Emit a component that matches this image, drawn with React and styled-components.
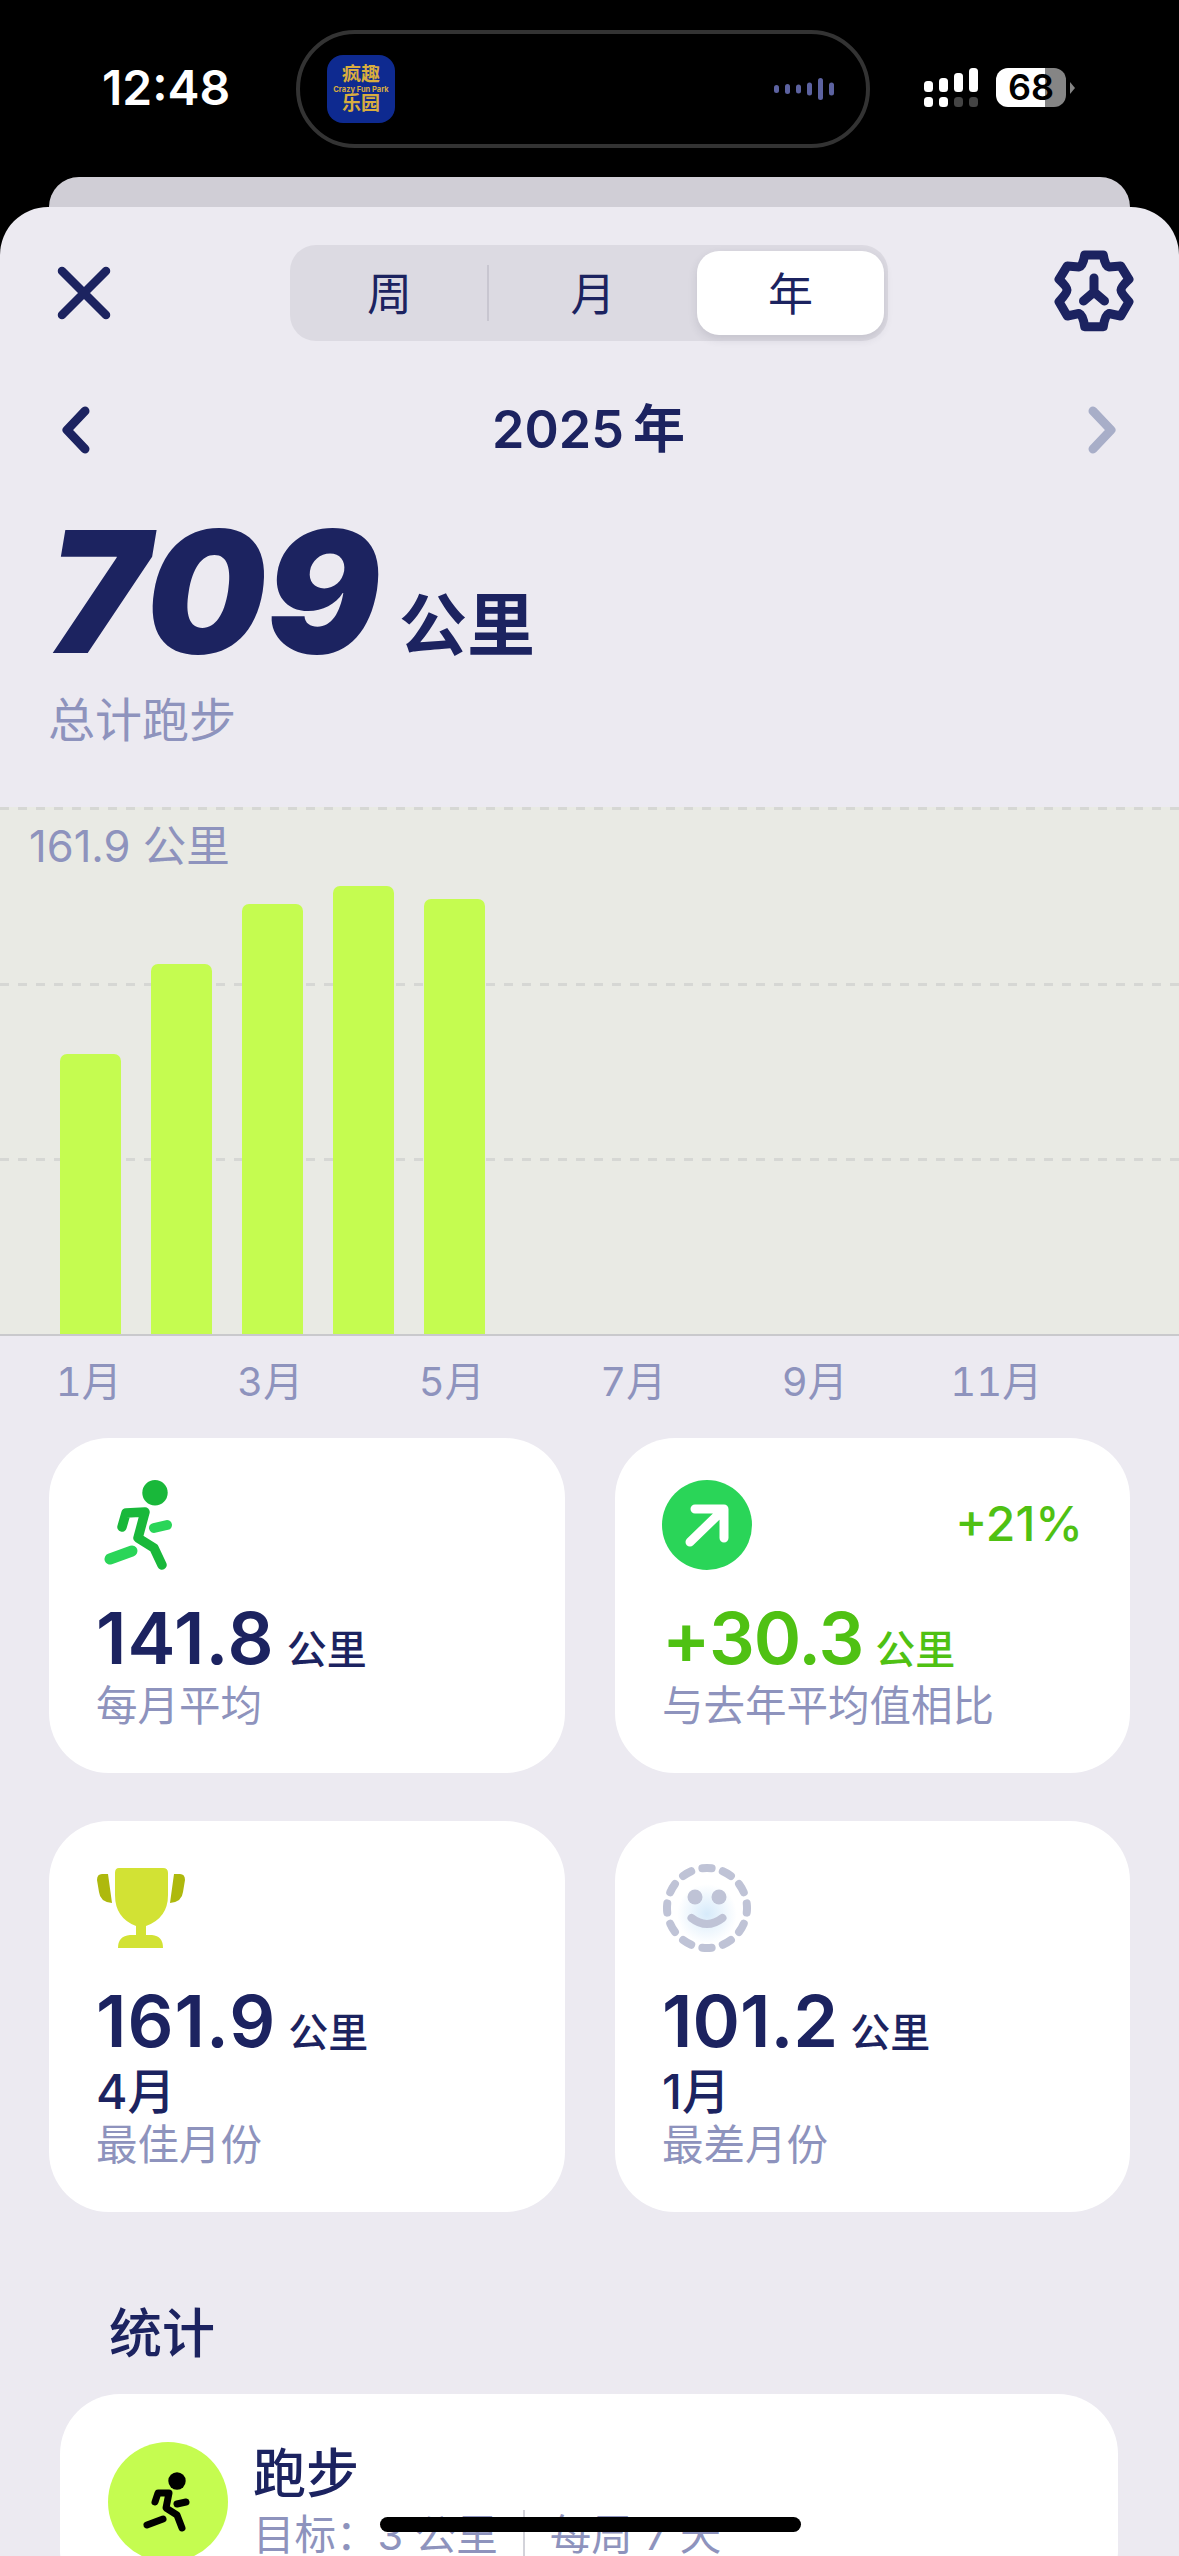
import React from "react";
import styled, { createGlobalStyle } from "styled-components";

const navy = "#1c2360";
const muted = "#8e93bd";
const green = "#4fc113";

const GlobalStyle = createGlobalStyle`
  html, body {
    margin: 0;
    background: #000;
    font-family: Inter, "Noto Sans CJK SC", sans-serif;
  }
`;

const Page = styled.div`
  position: relative;
  width: 1179px;
  height: 2556px;
  overflow: hidden;
  background: #000;
`;

const StatusBar = styled.div`
  display: flex;
  align-items: flex-start;
  height: 177px;
  box-sizing: border-box;
  padding: 30px 0 0 102px;
`;

const Time = styled.div`
  width: 194px;
  margin-top: 28px;
  color: #fff;
  font-size: 48px;
  line-height: 60px;
  font-weight: 600;
`;

const Island = styled.div`
  display: flex;
  align-items: center;
  justify-content: space-between;
  box-sizing: border-box;
  width: 574px;
  height: 118px;
  padding: 0 32px 0 27px;
  border: 4px solid #333;
  border-radius: 59px;
`;

const AppIcon = styled.div`
  display: flex;
  flex-direction: column;
  align-items: center;
  justify-content: center;
  width: 68px;
  height: 68px;
  border-radius: 16px;
  background: #0e2a90;
  color: #d9ad3f;
  font-weight: 700;
  overflow: hidden;
`;

const AppHan = styled.div`
  font-size: 19px;
  line-height: 20px;
`;

const AppLatin = styled.div`
  font-size: 7.5px;
  line-height: 9px;
  white-space: nowrap;
`;

const StatusRight = styled.div`
  display: flex;
  align-items: center;
  margin: 38px 0 0 54px;
`;

const Battery = styled.div`
  width: 70px;
  height: 39px;
  margin-left: 18px;
  border-radius: 12px;
  background: linear-gradient(90deg, #fff 0 ${(p) => p.$level}%, #858585 ${(p) => p.$level}% 100%);
  color: #000;
  font-size: 36px;
  line-height: 39px;
  font-weight: 600;
  text-align: center;
`;

const BatteryTip = styled.div`
  width: 0;
  height: 0;
  margin-left: 4px;
  border-left: 5px solid #858585;
  border-top: 6px solid transparent;
  border-bottom: 6px solid transparent;
`;

const BackSheet = styled.div`
  height: 30px;
  margin: 0 49px;
  border-radius: 30px 30px 0 0;
  background: #d0ced6;
`;

const Sheet = styled.div`
  height: 2349px;
  border-radius: 48px 48px 0 0;
  background: #eceaf1;
`;

const Header = styled.div`
  display: grid;
  grid-template-columns: 290px 598px 1fr;
  align-items: center;
  padding: 38px 0 0 0;
  height: 96px;
`;

const CloseSlot = styled.div`
  padding-left: 54px;
  display: flex;
`;

const GearSlot = styled.div`
  padding-left: 161px;
  display: flex;
  transform: translateY(-3px);
`;

const Segments = styled.div`
  display: grid;
  grid-template-columns: 199px 208px 1fr;
  align-items: stretch;
  box-sizing: border-box;
  height: 96px;
  padding: 6px 4px 6px 0;
  border-radius: 26px;
  background: #dcdae2;
`;

const Segment = styled.div`
  display: flex;
  align-items: center;
  justify-content: center;
  padding-bottom: 3px;
  color: ${navy};
  font-size: 45px;
  border-radius: 22px;
  background: ${(p) => (p.$active ? "#fff" : "transparent")};
  box-shadow: ${(p) => (p.$active ? "0 4px 10px rgba(60,60,80,0.14)" : "none")};
`;

const DividedSegment = styled(Segment)`
  border-radius: 0;
  position: relative;
  &::after {
    content: "";
    position: absolute;
    right: 0;
    top: 14px;
    bottom: 14px;
    width: 2px;
    background: #c8c6d0;
  }
`;

const NavRow = styled.div`
  display: grid;
  grid-template-columns: 1fr auto 1fr;
  align-items: center;
  height: 70px;
  margin-top: 54px;
  padding: 0 60px;
`;

const YearTitle = styled.div`
  color: ${navy};
  font-size: 52px;
  line-height: 70px;
  font-weight: 600;
  word-spacing: -4px;
  transform: translateX(-1px);
`;

const NextSlot = styled.div`
  display: flex;
  justify-content: flex-end;
  transform: translateX(-1px);
`;

const TotalRow = styled.div`
  display: flex;
  align-items: baseline;
  margin-top: 43px;
  padding-left: 48px;
  color: ${navy};
`;

const TotalValue = styled.div`
  font-size: 169px;
  line-height: 168px;
  font-weight: 900;
  font-style: italic;
`;

const TotalUnit = styled.div`
  margin-left: 19px;
  font-size: 68px;
  font-weight: 700;
  transform: translateY(-3px);
`;

const TotalLabel = styled.div`
  margin-top: 14px;
  padding-left: 48px;
  color: ${muted};
  font-size: 47px;
  line-height: 60px;
`;

const Chart = styled.div`
  position: relative;
  display: flex;
  align-items: flex-end;
  gap: 30px;
  box-sizing: border-box;
  height: 529px;
  margin-top: 57px;
  padding-left: 60px;
  background: #e9eae4;
  border-bottom: 2px solid #c9c9cc;
`;

const GridLines = styled.div`
  position: absolute;
  inset: 0;
  display: grid;
  grid-template-rows: repeat(3, 1fr);
`;

const GridLine = styled.div`
  height: 3px;
  background: repeating-linear-gradient(90deg, #d6d7d4 0 9px, transparent 9px 18px);
`;

const MaxLabel = styled.div`
  position: absolute;
  left: 29px;
  top: 14px;
  color: ${muted};
  font-size: 43.5px;
  line-height: 50px;
`;

const Bar = styled.div`
  position: relative;
  width: 61px;
  border-radius: 7px 7px 0 0;
  background: #c5fc50;
`;

const Axis = styled.div`
  display: grid;
  grid-template-columns: repeat(6, 181.5px);
  margin-left: -2px;
  height: 94px;
`;

const AxisLabel = styled.div`
  color: ${muted};
  font-size: 40px;
  line-height: 92px;
  text-align: center;
  font-variant-numeric: tabular-nums;
`;

const CardGrid = styled.div`
  display: grid;
  grid-template-columns: 516px 515px;
  column-gap: 50px;
  row-gap: 48px;
  margin-top: 8px;
  padding-left: 49px;
`;

const Card = styled.div`
  padding: 42px 47px 42px 47px;
  border-radius: 60px;
  background: #fff;
`;

const IconRow = styled.div`
  display: flex;
  align-items: center;
  justify-content: space-between;
  height: 90px;
`;

const Percent = styled.div`
  color: ${green};
  font-size: 48px;
  font-weight: 500;
  transform: translateY(-2px);
`;

const ValueRow = styled.div`
  display: flex;
  align-items: baseline;
  margin-top: 33px;
  color: ${(p) => p.$color || navy};
`;

const Value = styled.div`
  font-size: 72px;
  line-height: 70px;
  font-weight: 600;
  letter-spacing: ${(p) => p.$spacing ?? 1}px;
`;

const Unit = styled.div`
  margin-left: 12px;
  font-size: 40px;
  font-weight: 500;
`;

const Month = styled.div`
  margin-top: 8px;
  color: ${navy};
  font-size: 48px;
  line-height: 50px;
  font-weight: 500;
`;

const CardLabel = styled.div`
  margin-top: ${(p) => p.$gap}px;
  color: ${muted};
  font-size: 41.5px;
  line-height: 50px;
`;

const SectionTitle = styled.div`
  margin-top: 87px;
  padding-left: 109px;
  color: ${navy};
  font-size: 53px;
  line-height: 70px;
  font-weight: 500;
`;

const GoalCard = styled.div`
  display: flex;
  gap: 25px;
  margin: 25px 61px 0 60px;
  padding: 48px;
  border-radius: 60px;
  background: #fff;
`;

const GoalBadge = styled.div`
  flex: none;
  width: 120px;
  height: 120px;
  border-radius: 50%;
  background: #c5fc50;
`;

const GoalName = styled.div`
  margin-top: 2px;
  color: ${navy};
  font-size: 53px;
  line-height: 60px;
  font-weight: 500;
`;

const GoalMeta = styled.div`
  display: flex;
  align-items: center;
  margin-top: 6px;
  color: ${muted};
  font-size: 41.5px;
  line-height: 50px;
`;

const GoalPart = styled.div`
  padding-right: 25px;
  & + & {
    padding-left: 25px;
    border-left: 2px solid #d3d3da;
  }
`;

const HomeIndicator = styled.div`
  position: absolute;
  left: 380px;
  bottom: 24px;
  width: 421px;
  height: 15px;
  border-radius: 8px;
  background: #000;
`;

const Icon = styled.svg`
  display: block;
  flex: none;
`;

const Signal = () => {
  const top = [
    [925, 81],
    [940, 78],
    [955, 73],
    [970, 68],
  ];
  return (
    <Icon width="54" height="39" viewBox="925 68 54 39">
      {top.map(([x, y]) => (
        <rect key={x} x={x} y={y} width="9" height={92 - y} rx="3.5" fill="#fff" />
      ))}
      {top.map(([x], i) => (
        <rect key={x} x={x} y="97" width="9" height="10" rx="3.5" fill={i < 2 ? "#fff" : "#444"} />
      ))}
    </Icon>
  );
};

const Wave = () => {
  const bars = [8, 10, 9, 13, 22, 13];
  return (
    <Icon width="60" height="26" viewBox="0 0 60 26">
      {bars.map((h, i) => (
        <rect key={i} x={i * 11} y={13 - h / 2} width="5" height={h} rx="2.5" fill="#5c62a0" />
      ))}
    </Icon>
  );
};

const CloseIcon = () => (
  <Icon width="60" height="60" viewBox="0 0 60 60">
    <path d="M8 8 L52 52 M52 8 L8 52" stroke={navy} strokeWidth="8.5" strokeLinecap="round" />
  </Icon>
);

const GearIcon = () => (
  <Icon width="90" height="90" viewBox="30 15 90 90" fill="none" stroke={navy} strokeLinecap="round" strokeLinejoin="round">
    <path
      strokeWidth="9"
      d="M65.7 25 H84.3 Q86 36 90 37 L101.7 36 L110 49.3 Q102 57 102 60 Q102 63 110 71.7 L101.7 86 L90 83.5 Q86 85 84.3 96.7 H65.7 Q64 85 60 83.5 L48.3 86 L40 71.7 Q48 63 48 60 Q48 57 40 49.3 L48.3 36 L60 37 Q64 36 65.7 25 Z"
    />
    <path strokeWidth="9" d="M75 48 V62 M75 62 L64.5 71 M75 62 L85.5 71" />
  </Icon>
);

const Chevron = ({ flip, color }) => (
  <Icon width="34" height="50" viewBox="0 0 34 50">
    <path
      d={flip ? "M9 6 L27 25 L9 44" : "M25 6 L7 25 L25 44"}
      fill="none"
      stroke={color}
      strokeWidth="9"
      strokeLinecap="round"
      strokeLinejoin="round"
    />
  </Icon>
);

const RunnerIcon = () => (
  <Icon width="90" height="90" viewBox="0 0 90 90" fill="none" strokeLinecap="round" strokeLinejoin="round">
    <circle cx="59" cy="12.7" r="12.7" fill="#19b83a" />
    <path d="M26 47 L30 33 L49 32 L42 58 L58 68 L66 85" stroke="#19b83a" strokeWidth="9.5" />
    <path d="M58 48 L71 45" stroke="#2ad558" strokeWidth="10" />
    <path d="M14 79 L36 71" stroke="#2ad558" strokeWidth="11" />
  </Icon>
);

const ArrowIcon = () => (
  <Icon width="90" height="90" viewBox="0 0 90 90">
    <circle cx="45" cy="45" r="45" fill="#2ad558" />
    <path d="M33 29 H62 V58 M61 30 L28 62" fill="none" stroke="#fff" strokeWidth="9" strokeLinecap="round" strokeLinejoin="round" />
  </Icon>
);

const TrophyIcon = () => (
  <Icon width="90" height="90" viewBox="16 13 90 90">
    <path d="M22 24 H28 L32 53 Q20 52 19 42 L17 30 Q17 24 22 24 Z" fill="#aeb90d" />
    <path d="M100 24 H94 L90 53 Q102 52 103 42 L105 30 Q105 24 100 24 Z" fill="#aeb90d" />
    <path
      d="M39 18 H83 Q88 18 88 23 V45 Q88 68 66 76 V85 H72 Q83 86 83 98 H38 Q38 86 50 85 H56 V76 Q35 68 35 45 V23 Q35 18 39 18 Z"
      fill="#d2e234"
    />
  </Icon>
);

const SmileIcon = () => (
  <Icon width="90" height="90" viewBox="12 13 90 90" fill="none">
    <defs>
      <radialGradient id="smileGlow">
        <stop offset="0%" stopColor="#d6eafa" />
        <stop offset="100%" stopColor="#ffffff" />
      </radialGradient>
    </defs>
    <circle cx="57" cy="64" r="30" fill="url(#smileGlow)" />
    <circle cx="57" cy="58" r="40" stroke="#bfc3d6" strokeWidth="8" strokeLinecap="round" pathLength="240" strokeDasharray="9 11" strokeDashoffset="4.5" />
    <circle cx="45" cy="47" r="7.5" fill="#bfc3d6" />
    <circle cx="69" cy="47" r="7.5" fill="#bfc3d6" />
    <path d="M41.5 68 Q57 80 72.5 68" stroke="#bfc3d6" strokeWidth="8" strokeLinecap="round" />
  </Icon>
);

const BadgeRunner = () => (
  <Icon width="120" height="120" viewBox="0 0 120 120" fill="none" stroke="#000" strokeLinecap="round" strokeLinejoin="round">
    <circle cx="69" cy="39" r="8.7" fill="#000" stroke="none" />
    <path d="M47 60 L50 51 L61 51 L58 66 L69 73 L74 86" strokeWidth="7" />
    <path d="M69 62 L78 60" strokeWidth="7" />
    <path d="M39 83 L55 77" strokeWidth="7" />
  </Icon>
);

const bars = [280, 370, 430, 448, 435];
const months = ["1月", "3月", "5月", "7月", "9月", "11月"];

const App = () => {
  return (
    <Page>
      <GlobalStyle />
      <StatusBar>
        <Time>12:48</Time>
        <Island>
          <AppIcon>
            <AppHan>疯趣</AppHan>
            <AppLatin>Crazy Fun Park</AppLatin>
            <AppHan>乐园</AppHan>
          </AppIcon>
          <Wave />
        </Island>
        <StatusRight>
          <Signal />
          <Battery $level={70}>68</Battery>
          <BatteryTip />
        </StatusRight>
      </StatusBar>
      <BackSheet />
      <Sheet>
        <Header>
          <CloseSlot>
            <CloseIcon />
          </CloseSlot>
          <Segments>
            <DividedSegment>周</DividedSegment>
            <Segment>月</Segment>
            <Segment $active>年</Segment>
          </Segments>
          <GearSlot>
            <GearIcon />
          </GearSlot>
        </Header>
        <NavRow>
          <Chevron color={navy} />
          <YearTitle>2025 年</YearTitle>
          <NextSlot>
            <Chevron flip color="#a8aec8" />
          </NextSlot>
        </NavRow>
        <TotalRow>
          <TotalValue>709</TotalValue>
          <TotalUnit>公里</TotalUnit>
        </TotalRow>
        <TotalLabel>总计跑步</TotalLabel>
        <Chart>
          <GridLines>
            <GridLine />
            <GridLine />
            <GridLine />
          </GridLines>
          <MaxLabel>161.9 公里</MaxLabel>
          {bars.map((h, i) => (
            <Bar key={i} style={{ height: h }} />
          ))}
        </Chart>
        <Axis>
          {months.map((m) => (
            <AxisLabel key={m}>{m}</AxisLabel>
          ))}
        </Axis>
        <CardGrid>
          <Card>
            <IconRow>
              <RunnerIcon />
            </IconRow>
            <ValueRow>
              <Value>141.8</Value>
              <Unit>公里</Unit>
            </ValueRow>
            <CardLabel $gap={5}>每月平均</CardLabel>
          </Card>
          <Card>
            <IconRow>
              <ArrowIcon />
              <Percent>+21%</Percent>
            </IconRow>
            <ValueRow $color={green}>
              <Value $spacing={-1}>+30.3</Value>
              <Unit>公里</Unit>
            </ValueRow>
            <CardLabel $gap={5}>与去年平均值相比</CardLabel>
          </Card>
          <Card>
            <IconRow>
              <TrophyIcon />
            </IconRow>
            <ValueRow>
              <Value>161.9</Value>
              <Unit>公里</Unit>
            </ValueRow>
            <Month>4月</Month>
            <CardLabel $gap={3}>最佳月份</CardLabel>
          </Card>
          <Card>
            <IconRow>
              <SmileIcon />
            </IconRow>
            <ValueRow>
              <Value $spacing={0}>101.2</Value>
              <Unit>公里</Unit>
            </ValueRow>
            <Month>1月</Month>
            <CardLabel $gap={3}>最差月份</CardLabel>
          </Card>
        </CardGrid>
        <SectionTitle>统计</SectionTitle>
        <GoalCard>
          <GoalBadge>
            <BadgeRunner />
          </GoalBadge>
          <div>
            <GoalName>跑步</GoalName>
            <GoalMeta>
              <GoalPart>目标：3 公里</GoalPart>
              <GoalPart>每周 7 天</GoalPart>
            </GoalMeta>
          </div>
        </GoalCard>
      </Sheet>
      <HomeIndicator />
    </Page>
  );
};

export default App;
